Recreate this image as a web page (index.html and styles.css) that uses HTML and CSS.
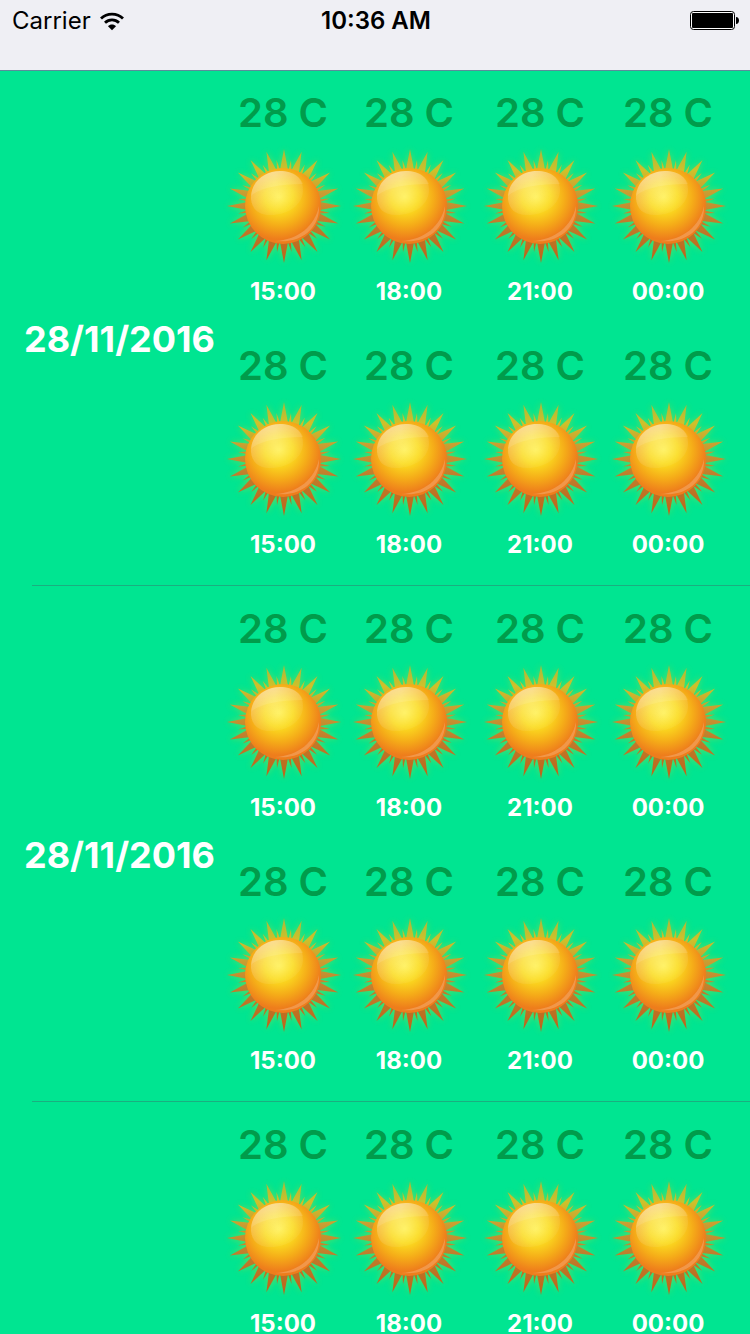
FILE: index.html
```
<!DOCTYPE html>
<html lang="en">
<head>
<meta charset="utf-8">
<meta name="viewport" content="width=device-width, initial-scale=1">
<title>Forecast</title>
<link rel="stylesheet" href="styles.css">
</head>
<body>
<svg class="defs" aria-hidden="true">
  <defs>
    <linearGradient id="rayFill" gradientUnits="userSpaceOnUse" x1="0" y1="-56" x2="0" y2="56">
      <stop offset="0" stop-color="#a9b93a"/><stop offset=".18" stop-color="#cfc02a"/><stop offset=".4" stop-color="#c99a32"/><stop offset=".65" stop-color="#c07c2c"/><stop offset="1" stop-color="#bd641a"/>
    </linearGradient>
    <radialGradient id="disc" gradientUnits="userSpaceOnUse" cx="-5" cy="-9" r="47">
      <stop offset="0" stop-color="#fff04a"/><stop offset=".3" stop-color="#fbdc20"/><stop offset=".62" stop-color="#f5ab18"/><stop offset=".9" stop-color="#ee7d1c"/><stop offset="1" stop-color="#ee7d1c"/>
    </radialGradient>
    <linearGradient id="gloss" x1=".3" y1="0" x2=".5" y2="1">
      <stop offset="0" stop-color="#fff" stop-opacity=".5"/><stop offset=".45" stop-color="#fff" stop-opacity=".24"/><stop offset="1" stop-color="#fff" stop-opacity=".06"/>
    </linearGradient>
    <linearGradient id="glossSide" x1="0" y1="0" x2="1" y2="0">
      <stop offset="0" stop-color="#fff"/><stop offset=".5" stop-color="#fff"/><stop offset="1" stop-color="#555"/>
    </linearGradient>
    <mask id="glossMask"><rect x="-40" y="-40" width="62" height="52" fill="url(#glossSide)"/></mask>
    <filter id="soft" x="-20%" y="-20%" width="140%" height="140%"><feGaussianBlur stdDeviation="3"/></filter>
    <path id="ray" d="M-4-36L0-57L4-36Z M4.500-36L7-46L7.500-35Z"/>
    <g id="rays5"><use href="#ray"/><use href="#ray" transform="rotate(18)"/><use href="#ray" transform="rotate(36)"/><use href="#ray" transform="rotate(54)"/><use href="#ray" transform="rotate(72)"/></g>
    <g id="rays"><use href="#rays5"/><use href="#rays5" transform="rotate(90)"/><use href="#rays5" transform="rotate(180)"/><use href="#rays5" transform="rotate(270)"/></g>
    <mask id="rayMask" maskUnits="userSpaceOnUse" x="-60" y="-60" width="120" height="120"><use href="#rays" fill="#fff"/></mask>
    <symbol id="sun" viewBox="-65 -65 128 128">
      <use href="#rays" fill="#d8d020" opacity=".5" filter="url(#soft)"/>
      <rect x="-60" y="-60" width="120" height="120" fill="url(#rayFill)" mask="url(#rayMask)"/>
      <circle cx="-1" r="38" fill="url(#disc)"/>
      <path d="M-9 35C14 34 31 20 35 0C36 20 20 38-9 35Z" fill="#fff" opacity=".2"/>
      <path d="M-33-10C-26-17-8-22 19-22C17-29 8-35-4-35C-20-35-32-25-33-10Z" fill="#fff" opacity=".1"/>
      <path d="M-33-7C-34-23-20-35-4-35C10-35 19-28 19-16C19-1 4 9-14 9C-27 9-32 2-33-7Z" fill="url(#gloss)" mask="url(#glossMask)"/>
    </symbol>
  </defs>
</svg>
<header class="status">
  <div class="network">
    <span>Carrier</span>
    <svg class="wifi" viewBox="0 0 26 19" aria-label="Wi-Fi" role="img">
      <path d="M2 6.500C8 .7 18 .7 24 6.500M6 10.700C10 6.800 16 6.800 20 10.700" fill="none" stroke="#000" stroke-width="2.800"/>
      <path d="M9 14.200C11 12 15 12 17 14.200L13 18.300Z"/>
    </svg>
  </div>
  <time class="clock">10:36 AM</time>
  <svg class="battery" viewBox="0 0 50 20" aria-label="Battery full" role="img">
    <rect x=".5" y="1.500" width="44" height="18" rx="3" fill="#fff" stroke="#000"/>
    <rect x="2" y="3" width="41" height="15" rx="1"/>
    <path d="M46 7C50 7 50 14 46 14Z"/>
  </svg>
</header>
<main class="days">
  <section class="day">
    <h2 class="date">28/11/2016</h2>
    <div class="forecast">
      <article class="slot"><span class="temp">28 C</span><svg class="sun"><use href="#sun"/></svg><time class="hour">15:00</time></article>
      <article class="slot"><span class="temp">28 C</span><svg class="sun"><use href="#sun"/></svg><time class="hour">18:00</time></article>
      <article class="slot"><span class="temp">28 C</span><svg class="sun"><use href="#sun"/></svg><time class="hour">21:00</time></article>
      <article class="slot"><span class="temp">28 C</span><svg class="sun"><use href="#sun"/></svg><time class="hour">00:00</time></article>
      <article class="slot"><span class="temp">28 C</span><svg class="sun"><use href="#sun"/></svg><time class="hour">15:00</time></article>
      <article class="slot"><span class="temp">28 C</span><svg class="sun"><use href="#sun"/></svg><time class="hour">18:00</time></article>
      <article class="slot"><span class="temp">28 C</span><svg class="sun"><use href="#sun"/></svg><time class="hour">21:00</time></article>
      <article class="slot"><span class="temp">28 C</span><svg class="sun"><use href="#sun"/></svg><time class="hour">00:00</time></article>
    </div>
  </section>
  <section class="day">
    <h2 class="date">28/11/2016</h2>
    <div class="forecast">
      <article class="slot"><span class="temp">28 C</span><svg class="sun"><use href="#sun"/></svg><time class="hour">15:00</time></article>
      <article class="slot"><span class="temp">28 C</span><svg class="sun"><use href="#sun"/></svg><time class="hour">18:00</time></article>
      <article class="slot"><span class="temp">28 C</span><svg class="sun"><use href="#sun"/></svg><time class="hour">21:00</time></article>
      <article class="slot"><span class="temp">28 C</span><svg class="sun"><use href="#sun"/></svg><time class="hour">00:00</time></article>
      <article class="slot"><span class="temp">28 C</span><svg class="sun"><use href="#sun"/></svg><time class="hour">15:00</time></article>
      <article class="slot"><span class="temp">28 C</span><svg class="sun"><use href="#sun"/></svg><time class="hour">18:00</time></article>
      <article class="slot"><span class="temp">28 C</span><svg class="sun"><use href="#sun"/></svg><time class="hour">21:00</time></article>
      <article class="slot"><span class="temp">28 C</span><svg class="sun"><use href="#sun"/></svg><time class="hour">00:00</time></article>
    </div>
  </section>
  <section class="day">
    <h2 class="date">28/11/2016</h2>
    <div class="forecast">
      <article class="slot"><span class="temp">28 C</span><svg class="sun"><use href="#sun"/></svg><time class="hour">15:00</time></article>
      <article class="slot"><span class="temp">28 C</span><svg class="sun"><use href="#sun"/></svg><time class="hour">18:00</time></article>
      <article class="slot"><span class="temp">28 C</span><svg class="sun"><use href="#sun"/></svg><time class="hour">21:00</time></article>
      <article class="slot"><span class="temp">28 C</span><svg class="sun"><use href="#sun"/></svg><time class="hour">00:00</time></article>
      <article class="slot"><span class="temp">28 C</span><svg class="sun"><use href="#sun"/></svg><time class="hour">15:00</time></article>
      <article class="slot"><span class="temp">28 C</span><svg class="sun"><use href="#sun"/></svg><time class="hour">18:00</time></article>
      <article class="slot"><span class="temp">28 C</span><svg class="sun"><use href="#sun"/></svg><time class="hour">21:00</time></article>
      <article class="slot"><span class="temp">28 C</span><svg class="sun"><use href="#sun"/></svg><time class="hour">00:00</time></article>
    </div>
  </section>
</main>
</body>
</html>
```
FILE: styles.css
```
* { box-sizing: border-box; }

body {
  display: flex;
  flex-direction: column;
  height: 100vh;
  margin: 0;
  background: #00e591;
  color: #fff;
  font-family: Inter, "Liberation Sans", sans-serif;
}

.defs { position: absolute; width: 0; height: 0; }

.status {
  display: grid;
  grid-template-columns: 1fr auto 1fr;
  align-items: start;
  flex: none;
  padding: 6px 10px 34px 12px;
  border-bottom: 1px solid #5a8c9c;
  background: #efeff4;
  color: #000;
  font-size: 24px;
  line-height: 30px;
}

.network { display: flex; align-items: center; gap: 8px; }
.wifi { width: 26px; height: 19px; }
.clock { font-weight: 600; }
.battery { justify-self: end; width: 50px; height: 20px; margin-top: 4px; }

.days {
  flex: 1;
  min-height: 0;
  overflow-y: auto;
  scrollbar-width: none;
}

.day {
  display: grid;
  grid-template-columns: 220px 1fr;
  align-items: center;
  padding: 18px 22px 24px 0;
  background: linear-gradient(#1aaf80, #1aaf80) 32px calc(100% - 1px) / 100% 1px no-repeat;
}

.date {
  margin: 0 0 0 24px;
  padding-top: 26px;
  font-size: 36px;
  font-weight: 700;
  line-height: 44px;
}

.forecast {
  display: grid;
  grid-template-columns: minmax(0, 126fr) minmax(0, 126fr) minmax(0, 136fr) minmax(0, 120fr);
  row-gap: 32px;
}

.slot { display: flex; flex-direction: column; align-items: center; }
.temp { color: #009c4b; font-size: 40px; font-weight: 600; line-height: 48px; }
.sun { flex: none; width: 128px; height: 128px; margin: 4px 0 5px; }
.hour { font-size: 24px; font-weight: 700; line-height: 36px; }
```
